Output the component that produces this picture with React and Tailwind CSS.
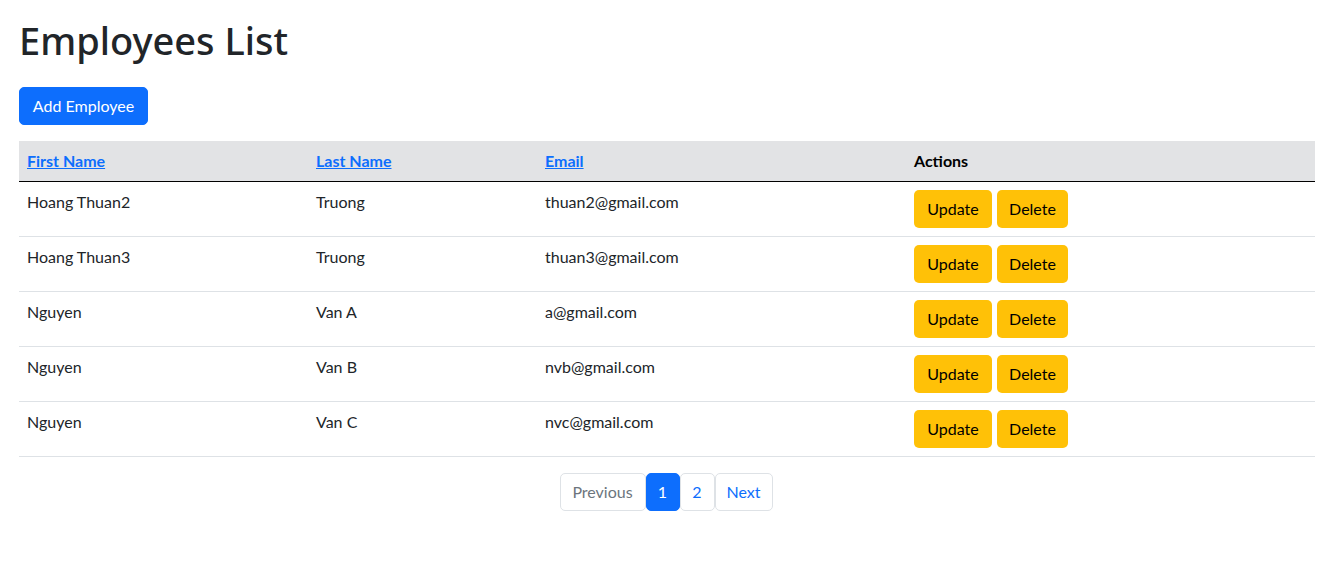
import React from "react";

const rows = [
  ["Hoang Thuan2", "Truong", "thuan2@gmail.com"],
  ["Hoang Thuan3", "Truong", "thuan3@gmail.com"],
  ["Nguyen", "Van A", "a@gmail.com"],
  ["Nguyen", "Van B", "nvb@gmail.com"],
  ["Nguyen", "Van C", "nvc@gmail.com"],
];

export default function App() {
  return (
    <div className="min-h-[573px] bg-white pl-[19px] pr-[21px] pt-4 font-['Lato',sans-serif] text-[16px] leading-6 text-[#212529]">
      <h1 className="mb-[23px] pt-px font-['Noto_Sans',sans-serif] text-[38px] font-medium leading-[47px]">Employees List</h1>
      <button className="mb-4 h-[38px] w-[129px] rounded-[5px] border border-[#0d6efd] bg-[#0d6efd] text-white">
        Add Employee
      </button>
      <table className="w-full border-collapse text-left">
        <colgroup>
          <col className="w-[289px]" />
          <col className="w-[229px]" />
          <col className="w-[369px]" />
          <col />
        </colgroup>
        <thead>
          <tr className="border-b border-black bg-[#e2e3e5]">
            <th className="p-2 font-bold">
              <a href="#" className="text-[#0d6efd] underline">First Name</a>
            </th>
            <th className="p-2 font-bold">
              <a href="#" className="text-[#0d6efd] underline">Last Name</a>
            </th>
            <th className="p-2 font-bold">
              <a href="#" className="text-[#0d6efd] underline">Email</a>
            </th>
            <th className="p-2 font-bold text-black">Actions</th>
          </tr>
        </thead>
        <tbody>
          {rows.map((r, i) => (
            <tr key={i} className="border-b border-[#dee2e6] align-top">
              <td className="p-2">{r[0]}</td>
              <td className="p-2">{r[1]}</td>
              <td className="p-2">{r[2]}</td>
              <td className="p-2">
                <div className="flex gap-[5px]">
                  <button className="h-[38px] w-[78px] rounded-[5px] bg-[#ffc107] text-black">Update</button>
                  <button className="h-[38px] w-[71px] rounded-[5px] bg-[#ffc107] text-black">Delete</button>
                </div>
              </td>
            </tr>
          ))}
        </tbody>
      </table>
      <div className="mt-4 flex justify-center pr-[2px]">
        <div className="flex">
          <span className="flex h-[38px] w-[86px] items-center justify-center rounded-[5px] border border-[#dee2e6] text-[#6c757d]">Previous</span>
          <span className="flex h-[38px] w-[34px] items-center justify-center rounded-[5px] border border-[#0d6efd] bg-[#0d6efd] text-white">1</span>
          <span className="flex h-[38px] w-[35px] items-center justify-center rounded-[5px] border border-[#dee2e6] text-[#0d6efd]">2</span>
          <span className="flex h-[38px] w-[58px] items-center justify-center rounded-[5px] border border-[#dee2e6] text-[#0d6efd]">Next</span>
        </div>
      </div>
    </div>
  );
}
